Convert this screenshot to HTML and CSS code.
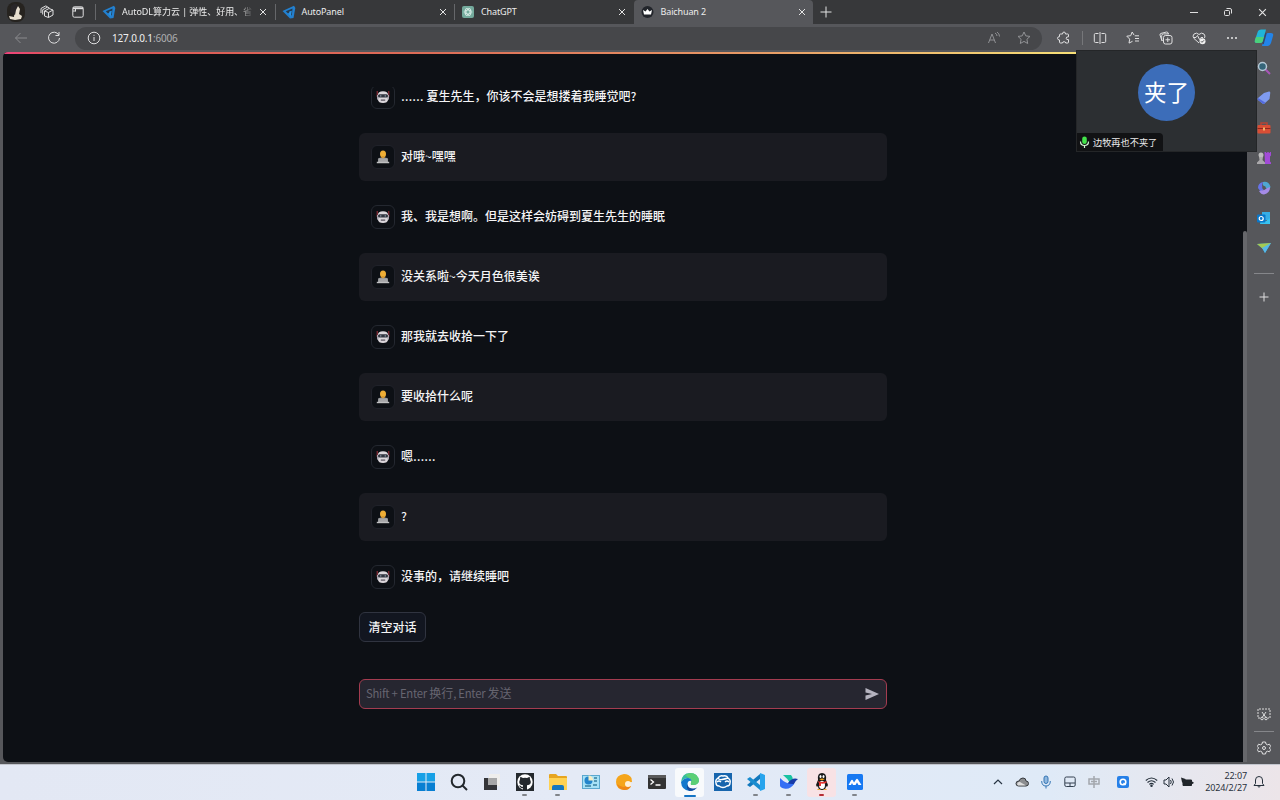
FILE: index.html
```html
<!DOCTYPE html>
<html lang="zh-CN">
<head>
<meta charset="utf-8">
<title>Baichuan 2</title>
<link rel="stylesheet" href="styles.css">
</head>
<body>
<svg class="defs" width="0" height="0">
  <symbol id="bot" viewBox="0 0 14 14">
    <path d="M1.200 1v6M12.800 1v6" stroke="#a3303c" stroke-width="1"/>
    <path d="M1.800 5Q2 1.200 7 1.200T12.200 5v4.500Q11.500 13 7 13T1.800 9.500z" fill="#dcd7dc"/>
    <path d="M1 5h1.500v4.500H1zM11.500 5H13v4.500h-1.500z" fill="#aaa5ae"/>
    <rect x="2" y="4.300" width="10" height="3.200" rx="1.500" fill="#30343e"/>
    <circle cx="4.700" cy="5.900" r=".8" fill="#7d8797"/><circle cx="9.300" cy="5.900" r=".8" fill="#7d8797"/>
    <path d="M4.800 9.500h4.400v1.200H4.800z" fill="#57525c"/>
  </symbol>
  <symbol id="person" viewBox="0 0 14 14">
    <path d="M2 12V9.500Q3 7.200 7 7.200t5 2.300V12z" fill="#77808a"/>
    <ellipse cx="7" cy="4" rx="3" ry="3.600" fill="#efae35"/>
    <path d="M5.500 6h3v2.500h-3z" fill="#d89a32"/>
    <path d="M2.300 8.300h9.400v4H2.300z" fill="#a5a5a7"/><path d="M.8 11.800h12.400v1.400H.8z" fill="#bfbfc0"/>
  </symbol>
  <symbol id="close" viewBox="0 0 8 8"><path d="M1 1l6 6M7 1L1 7" stroke="#e4e4e4" stroke-width="1"/></symbol>
  <symbol id="autodl" viewBox="0 0 14 14">
    <path d="M.5 6L12 .8 13.300 3 11.500 13 8 13.500z" fill="#2380cf"/>
    <path d="M3.800 6.300L10.500 3.400 9.900 10 7.900 11 8.300 7.300 5.800 8.200z" fill="#24394d"/>
    <path d="M7.300 6.500l2.500-.8-1 5.800-1.700-1.800z" fill="#2993e6"/>
  </symbol>
</svg>

<header class="titlebar">
  <div class="title-tools">
    <svg class="profile" width="18" height="20" viewBox="0 0 18 20"><rect width="18" height="20" rx="8" fill="#26231f"/><path d="M8 5l3-1 2 3-1 5 3 2-1 3-6 1-5-1-1-3 5 1z" fill="#e8dfcf"/><path d="M4 4q5-5 7 0l-2 4-1 5-5-3z" fill="#292628"/></svg>
    <svg width="14" height="14" viewBox="0 0 14 14" class="line"><path d="M4.500 6L9 3.500 13 5v5L8.500 12.500 4.500 11zM4.500 6l4 1.500L13 5M8.500 7.500v5M2.700 9.500V4.700L7.300 2.200l2 .6M1 8V3.500L5.500 1l2 .6"/></svg>
    <svg width="12" height="12" viewBox="0 0 12 12" class="line"><rect x=".8" y=".8" width="10.400" height="10.400" rx="1.500"/><path d="M1 2.300h10" stroke-width="1.800"/><path d="M3.500 3v2.500M1 5h2.500"/></svg>
  </div>
  <nav class="tabs">
    <div class="tab"><svg width="14" height="14"><use href="#autodl"/></svg><span class="tab-name fade">AutoDL算力云 | 弹性、好用、省</span><svg width="8" height="8"><use href="#close"/></svg></div>
    <div class="tab"><svg width="14" height="14"><use href="#autodl"/></svg><span class="tab-name">AutoPanel</span><svg width="8" height="8"><use href="#close"/></svg></div>
    <div class="tab"><svg width="14" height="14" viewBox="0 0 14 14"><rect x="1" y="1" width="12" height="12" rx="2" fill="#74aa9c"/><g fill="none" stroke="#dff0eb" stroke-width=".7"><ellipse cx="7" cy="7" rx="4" ry="2"/><ellipse cx="7" cy="7" rx="4" ry="2" transform="rotate(60 7 7)"/><ellipse cx="7" cy="7" rx="4" ry="2" transform="rotate(120 7 7)"/></g></svg><span class="tab-name">ChatGPT</span><svg width="8" height="8"><use href="#close"/></svg></div>
    <div class="tab active"><svg width="14" height="14" viewBox="0 0 14 14"><circle cx="6.500" cy="7" r="6" fill="#22252b"/><path d="M2 5l2.500 1.500 2-2.500 2 2.500L11 5l-1 4.500H3z" fill="#fff"/></svg><span class="tab-name">Baichuan 2</span><svg width="8" height="8"><use href="#close"/></svg></div>
  </nav>
  <svg class="newtab" width="12" height="12" viewBox="0 0 12 12"><path d="M6 .5v11M.5 6h11" stroke="#e3e3e3"/></svg>
  <div class="window-controls">
    <svg width="10" height="10" viewBox="0 0 10 10" class="line"><path d="M1 5.500h8"/></svg>
    <svg width="10" height="10" viewBox="0 0 10 10" class="line"><rect x="1.500" y="3.500" width="5" height="5" rx="1"/><path d="M3.500 1.500H7q1.500 0 1.500 1.500v3.500"/></svg>
    <svg width="9" height="9" viewBox="0 0 8 8"><use href="#close"/></svg>
  </div>
</header>

<div class="toolbar">
  <div class="nav-buttons">
    <svg width="14" height="12" viewBox="0 0 14 12" fill="none" stroke="#8a8b8e"><path d="M13 6H1.500M6.500 1l-5 5 5 5"/></svg>
    <svg width="14" height="14" viewBox="0 0 14 14" class="line"><path d="M11.800 4A5.500 5.500 0 1 0 12.500 7M12 1v3.500H8.500"/></svg>
  </div>
  <div class="address">
    <svg width="14" height="14" viewBox="0 0 14 14" class="line"><circle cx="7" cy="7" r="5.800"/><path d="M7 6v4M7 3.800v1"/></svg>
    <span class="url">127.0.0.1<span class="port">:6006</span></span>
    <svg width="14" height="14" viewBox="0 0 14 14" fill="none" stroke="#8f9093"><path d="M1.500 12L5 3l3.500 9M2.700 9h4.600M8 2q2 1 2 3M10 1q2.500 1.500 2.500 4.500"/></svg>
    <svg class="star" width="14" height="14" viewBox="0 0 14 14" fill="none" stroke="#929396"><path d="M7 1l1.800 3.900 4.200.5-3.100 2.900.8 4.200L7 10.400l-3.700 2.100.8-4.200L1 5.400l4.200-.5z"/></svg>
  </div>
  <div class="extensions"><svg width="14" height="14" viewBox="0 0 14 14" class="line"><path d="M4.500 3H6.500q0-2 1.500-2T9.500 3h2.300q.7 0 .7.700v2.100Q10.200 5.600 10.200 7.300t2.300 1.300v2.700q0 .7-.7.700H9.700q0-1.300-1.600-1.300T6.500 12H4.300q-.8 0-.8-.8V9Q1.500 9 1.500 7.300t2-1.600V4q0-1 1-1z"/></svg></div>
  <div class="actions">
    <svg width="14" height="14" viewBox="0 0 14 14" class="line"><path d="M5.500 2.500H2.500Q1.300 2.500 1.300 3.700v6.600q0 1.200 1.200 1.200h3M8.500 2.500h3q1.200 0 1.200 1.200v6.600q0 1.200-1.200 1.200h-3M7 1v12"/></svg>
    <svg width="14" height="14" viewBox="0 0 14 14" class="line"><path d="M8.700 4.800H13M9 7.500h4M9 10h4M8 4L6.200 1 4.700 4.700.8 5.200l2.900 2.900-.7 4L6.500 10.300"/></svg>
    <svg width="14" height="14" viewBox="0 0 14 14" class="line"><rect x="4.500" y="4.500" width="8.500" height="8.500" rx="2"/><path d="M8.750 6.500v4.500M6.500 8.750H11M3 10L1 4q-.3-1.200 1-1.600L7.500 1Q8.700.8 9 2l.3 1M3.500 10Q2.700 9 2.700 8V4.700q0-1.800 1.800-1.800H10"/></svg>
    <svg width="14" height="14" viewBox="0 0 14 14" class="line"><path d="M7 12L2 7.500Q0 5 2 3q2.500-2 5 .5Q9.500 1 12 3q1.700 2 .5 4M1.500 6.500H4l1.500-2 2 4 1.500-2h2"/><circle cx="10.500" cy="10.300" r="3" fill="#f1f1f1" stroke="none"/><path d="M9 10.300l1 1 2-2" stroke="#505155"/></svg>
    <svg width="12" height="4" viewBox="0 0 12 4" fill="#e8e8e8"><circle cx="2" cy="2" r="1"/><circle cx="6" cy="2" r="1"/><circle cx="10" cy="2" r="1"/></svg>
  </div>
  <div class="copilot"><svg width="20" height="18" viewBox="0 0 20 18"><path d="M4 2q1-1.500 3-1.500h5L9 12q-.7 2-3 2H3Q0 14 1 11z" fill="#20b5d9"/><path d="M2 8h8L9 12q-.7 2-3 2H3Q0 14 1 11z" fill="#4bd07b"/><path d="M11 6q1-2 3-2h3q3 0 2 3l-2 7q-1 3-3 3H8z" fill="#2384e8"/><path d="M12 4l-3 11" stroke="#34476a" stroke-width="1.500"/></svg></div>
</div>

<div class="workspace">
  <div class="page">
    <div class="progress"></div>
    <main class="app">
      <section class="chat">
        <div class="message"><span class="avatar"><svg width="14" height="14"><use href="#bot"/></svg></span><p><span class="dots">……</span> 夏生先生，你该不会是想搂着我睡觉吧?</p></div>
        <div class="message user"><span class="avatar"><svg width="14" height="14"><use href="#person"/></svg></span><p>对哦~嘿嘿</p></div>
        <div class="message"><span class="avatar"><svg width="14" height="14"><use href="#bot"/></svg></span><p>我、我是想啊。但是这样会妨碍到夏生先生的睡眠</p></div>
        <div class="message user"><span class="avatar"><svg width="14" height="14"><use href="#person"/></svg></span><p>没关系啦~今天月色很美诶</p></div>
        <div class="message"><span class="avatar"><svg width="14" height="14"><use href="#bot"/></svg></span><p>那我就去收拾一下了</p></div>
        <div class="message user"><span class="avatar"><svg width="14" height="14"><use href="#person"/></svg></span><p>要收拾什么呢</p></div>
        <div class="message"><span class="avatar"><svg width="14" height="14"><use href="#bot"/></svg></span><p>嗯<span class="dots">……</span></p></div>
        <div class="message user"><span class="avatar"><svg width="14" height="14"><use href="#person"/></svg></span><p>?</p></div>
        <div class="message"><span class="avatar"><svg width="14" height="14"><use href="#bot"/></svg></span><p>没事的，请继续睡吧</p></div>
      </section>
      <button class="clear">清空对话</button>
      <div class="prompt"><span><span class="latin">Shift + Enter </span>换行<span class="latin">, Enter </span>发送</span><svg width="14" height="12" viewBox="0 0 14 12"><path d="M.5 0L14 6 .5 12V7.500L7 6 .5 4.500z" fill="#b5b3bf"/></svg></div>
    </main>
    <div class="scrollbar"></div>
  </div>

  <aside class="sidebar">
    <svg width="14" height="14" viewBox="0 0 14 14"><path d="M8 8l5 5" stroke="#a855b8" stroke-width="2"/><circle cx="5.500" cy="5.500" r="4" fill="#356579" stroke="#b5c8d5" stroke-width="1.500"/></svg>
    <svg width="14" height="14" viewBox="0 0 14 14"><path d="M7 2l5-1.500q1.300 0 1.300 1.300L12.500 8l-5 4.500q-1 .8-2 0L1 9q-.8-1 0-2z" fill="#7f9bf0"/><path d="M1 7l7.500 4.700-1 .8q-1 .8-2 0L1 9q-.8-1 0-2z" fill="#536adc"/></svg>
    <svg width="14" height="14" viewBox="0 0 14 14"><path d="M4 4V2h6v2" fill="none" stroke="#b74434" stroke-width="1.500"/><rect x=".5" y="4" width="13" height="8.500" rx="1" fill="#d94e35"/><path d="M.5 7.500h13" stroke="#8e291f"/><path d="M6 6.500h2v3H6z" fill="#f3b066"/></svg>
    <svg width="14" height="14" viewBox="0 0 14 14"><path d="M7.500 1h1.700v1h1V1h1.600v1h1V1H14v3.500l-1 1v5l1 1V13H8z" fill="#a24bd7"/><circle cx="4" cy="4" r="2.500" fill="#bbb"/><path d="M2 6h4L5.500 9 8 11.500V13H0v-1.500L2.500 9z" fill="#aaa8ab"/></svg>
    <svg width="14" height="14" viewBox="0 0 14 14"><path d="M6 1Q1 2 1 7l3 4 3-3-2-3z" fill="#6673e8"/><path d="M6 1q6-1 7.500 5L12 9 8.500 7 6 4z" fill="#4fa7d2"/><path d="M13 6q0 6-6 7.500Q4 13.500 2 10l5-1 3.500-2z" fill="#a58be7"/><circle cx="7" cy="6.800" r="1.800" fill="#56575b"/></svg>
    <svg width="14" height="14" viewBox="0 0 14 14"><rect x="5" y="1" width="8" height="8" fill="#36aee6"/><path d="M4 7l5 3 4-3v6H3z" fill="#38c2f0"/><rect y="3.500" width="8.500" height="8" rx="1" fill="#0877ca"/><circle cx="4.200" cy="7.500" r="2" fill="none" stroke="#fff" stroke-width="1.200"/></svg>
    <svg width="14" height="14" viewBox="0 0 14 14"><path d="M0 3l14-1-6 10-2-4z" fill="#3e9edb"/><path d="M0 3l14-1-8 6z" fill="#a4ca52"/><path d="M5 7l9-5-6 10z" fill="#56b9e8"/></svg>
    <hr>
    <svg width="12" height="14" viewBox="0 0 12 14" class="line add"><path d="M6 2.500v9M1.500 7h9"/></svg>
    <svg class="capture" width="14" height="14" viewBox="0 0 14 14" fill="none" stroke="#ddd"><path d="M3 11H1V2h12v9h-2" stroke-dasharray="2 1"/><path d="M5 5l3.500 5M9 5l-3.500 5"/><circle cx="5" cy="11.500" r="1.300"/><circle cx="9" cy="11.500" r="1.300"/></svg>
    <hr class="lower">
    <svg width="14" height="14" viewBox="0 0 14 14" class="line"><path d="M5.500 1h3L9 3l1.500.8 2-.6 1.200 2.300L12.300 7l1.400 1.500-1.200 2.300-2-.6L9 11l-.5 2h-3L5 11l-1.500-.8-2 .6L.3 8.500 1.700 7 .3 5.500l1.200-2.300 2 .6L5 3z"/><circle cx="7" cy="7" r="1.500"/></svg>
  </aside>
</div>

<footer class="taskbar">
  <div class="apps">
    <span><svg width="18" height="18" viewBox="0 0 18 18"><path d="M0 0h8.500v8.500H0zM9.500 0H18v8.500H9.500z" fill="#17a0e6"/><path d="M0 9.500h8.500V18H0zM9.500 9.500H18V18H9.500z" fill="#087fd2"/></svg></span>
    <span><svg width="18" height="18" viewBox="0 0 18 18" fill="none" stroke="#23282d" stroke-width="2"><circle cx="8" cy="8" r="6.300"/><path d="M12.500 12.500L17 17"/></svg></span>
    <span><svg width="18" height="18" viewBox="0 0 18 18"><path d="M6 1h11v12H6z" fill="#efeeec"/><path d="M1 5h13v12H1z" fill="#343538"/><path d="M5 5h9v7H5z" fill="#a7a7a7"/></svg></span>
    <span class="running"><svg width="18" height="18" viewBox="0 0 18 18"><path d="M0 0h18v18H0z" fill="#24292e"/><circle cx="9" cy="9" r="7.700" fill="#fff"/><path d="M4.300 3.700L7 5q2-.5 4 0l2.700-1.300.3 2.500q2.500 5.500-3 6v5H7v-2q-2 .5-3-1.500l-1-1q1.500-.5 2.500 1H7v-1.500q-5.500-.5-3-6z" fill="#24292e"/></svg></span>
    <span class="running"><svg width="18" height="18" viewBox="0 0 18 18"><path d="M0 2q0-1 1-1h6l2 2h8q1 0 1 1v12H0z" fill="#e7a520"/><path d="M0 5h18v12H0z" fill="#ffd253"/><path d="M3 17v-3q0-2 2-2h8q2 0 2 2v3z" fill="#1677bf"/></svg></span>
    <span><svg width="18" height="16" viewBox="0 0 18 16"><path d="M0 1h18v14H0z" fill="#5ba8cf"/><path d="M1 2h16v12H1z" fill="#a7e1f6"/><circle cx="6.500" cy="6.500" r="4" fill="#2385cb"/><path d="M6.500 6.500v-5q4 0 5 5z" fill="#f3ecc5"/><path d="M12 4h3M12 7h3M3 12h6M11 11h4" stroke="#377f9e" stroke-width="1.500"/></svg></span>
    <span><svg width="18" height="18" viewBox="0 0 18 18"><path d="M9 1q5 0 7.500 4L17 9l-4 .5-1 3 4 1q-3 4-7 3.500-8-1-8-8T9 1z" fill="#f5a51b"/><path d="M2 11q6 5 10 1.500l4 1q-3 4-7 3.500-6-1-7-6z" fill="#ef8717"/><circle cx="13" cy="11" r="3" fill="#fff0d6"/></svg></span>
    <span><svg width="18" height="14" viewBox="0 0 18 14"><rect width="18" height="14" rx="1" fill="#333"/><path d="M0 0h18v3H0z" fill="#59595a"/><path d="M2.500 4.500l3 2.500-3 2.500M7.500 10h5" fill="none" stroke="#fff" stroke-width="1.300"/></svg></span>
    <span class="running current"><svg width="18" height="18" viewBox="0 0 18 18"><path d="M0 9Q1 0 9 0t9 8q-1 4-6 4-3 0-2-2 1.500-5-3-5-4 0-7 4z" fill="#34bba1"/><path d="M9 0q8 0 9 8-1 4-6 4-3 0-2-2 1-4-2-5L4 2z" fill="#5bcf75"/><path d="M0 9q3-4 7-4 3 0 3.500 3Q7 7 6.500 11q0 5 6 5 3 0 4-2-3 4-8 4-8-1-8.500-9z" fill="#1478cc"/><path d="M6.500 11q0 4 4.500 4.500 4 .5 5.500-1.500-3 4-8 4-4-2-2-7z" fill="#164c9e"/></svg></span>
    <span><svg width="18" height="18" viewBox="0 0 18 18"><path d="M0 0h18v18H0z" fill="#1765ad"/><path d="M4 5Q6 2 9 3q4-1 5 2 3 2 2 5 0 3-3 3-4 3-8 0-3 0-3-3-1-3 2-5zM4 5q1 2 4 1.500T14 5M3 9q2-2 4 0M11 9q2-2 4 0" fill="none" stroke="#fff" stroke-width="1.400"/></svg></span>
    <span class="running"><svg width="18" height="18" viewBox="0 0 18 18"><path d="M13 0l5 2v14l-5 2z" fill="#27a4ed"/><path d="M13 1v5L3 14 0 12z" fill="#1278bd"/><path d="M13 17v-5L3 4 0 6z" fill="#198ccf"/></svg></span>
    <span class="running"><svg width="18" height="18" viewBox="0 0 18 18"><path d="M3 2h8q2 2 2 5l-3 3Q7 5 3 2z" fill="#18c2a3"/><path d="M8 10q4-6 10-4-3 2-4 5-3 3-7 1z" fill="#173aa8"/><path d="M0 5q6 6.500 14 6-4 6-10 4.500-4-1-4-3z" fill="#356ff4"/></svg></span>
    <span class="running alert"><svg width="18" height="18" viewBox="0 0 18 18"><path d="M5 7q-1-7 4-7t4 7l2 5-1 2-1-1q0 4-4 4t-4-4l-1 1-1-2z" fill="#17181a"/><ellipse cx="9" cy="12" rx="3" ry="4" fill="#fff"/><ellipse cx="7.500" cy="3.500" rx="1" ry="1.500" fill="#fff"/><ellipse cx="10.500" cy="3.500" rx="1" ry="1.500" fill="#fff"/><path d="M6 6q3-1 6 0l-3 1.500zM4 17q1-2 4 0zM10 17q3-2 4 0z" fill="#f5a91c"/><path d="M4.500 8q4.500 2 9 0v2Q10 11 8 10.500V13H6v-3z" fill="#e43432"/></svg></span>
    <span class="running"><svg width="16" height="16" viewBox="0 0 16 16"><rect width="16" height="16" rx="1.500" fill="#1779f2"/><path d="M1.500 11l2.500-4.500q1-1.500 2 0L7 8.500 9 5.500q1-1.500 2 0l3.500 5.500h-3L10 8.500 8.500 11H6L5 9l-1 2z" fill="#fff"/></svg></span>
  </div>
  <div class="tray">
    <svg width="10" height="8" viewBox="0 0 10 8" fill="none" stroke="#283544" stroke-width="1.200"><path d="M1 6l4-4 4 4"/></svg>
    <svg width="14" height="12" viewBox="0 0 14 12"><path d="M3.500 10Q1 10 1 7.500T4 5q1-3 4-3t3 3q2.500 0 2.500 2.500T11 10z" fill="#8b8d90" stroke="#34383c"/><path d="M3 9.500q-1.500-1-.5-2.500T5 6l6 3.500z" fill="#ddd"/></svg>
    <svg width="12" height="14" viewBox="0 0 12 14" fill="none" stroke="#3475b4"><rect x="4" y="1" width="4" height="7.500" rx="2" fill="#8fb8df"/><path d="M1.700 6q0 5 4.300 5t4.300-5M6 11v2.500"/></svg>
    <svg width="12" height="12" viewBox="0 0 12 12" fill="none" stroke="#344150"><rect x=".8" y="1" width="10.400" height="9.500" rx="1.500"/><path d="M1 7h10M6 7v3"/></svg>
    <svg width="12" height="12" viewBox="0 0 12 12" fill="none" stroke="#a3a7ad" stroke-width="1.500"><path d="M1 3h10v5H1zM6 0v12M3 5.500h6"/></svg>
    <span class="q"><svg width="12" height="12" viewBox="0 0 12 12"><rect width="12" height="12" rx="2" fill="#2680e8"/><circle cx="6" cy="6" r="2.800" fill="none" stroke="#fff" stroke-width="1.600"/><path d="M6.500 7l2 2" stroke="#fff" stroke-width="1.200"/></svg></span>
    <span class="status"><svg width="13" height="12" viewBox="0 0 13 12" fill="none" stroke="#26313c" stroke-width="1.100"><path d="M.8 4.500q5.700-5 11.400 0M2.500 6.500q4-3.500 8 0M4.300 8.300q2.200-2 4.400 0"/><circle cx="6.500" cy="9.800" r=".7"/></svg><svg width="12" height="12" viewBox="0 0 12 12" fill="none" stroke="#26313c"><path d="M1 4h2l3-3v10L3 8H1zM7.500 4q1.500 2 0 4M9 2.500q3 3.500 0 7"/></svg><svg width="14" height="12" viewBox="0 0 14 12"><path d="M3 4h8.500v5.500H3zM12.500 6h.5v1.500h-.5z" fill="#20252a" stroke="#20252a"/><path d="M1 1.500l4.500 1.500v3q-2 2-3.500 0z" fill="#20252a"/></svg></span>
    <div class="clock"><span>22:07</span><span>2024/2/27</span></div>
    <svg class="bell" width="12" height="14" viewBox="0 0 12 14" fill="none" stroke="#26313c"><path d="M1 10.500l1.500-2V5q0-3.500 3.500-3.500T9.500 5v3.500l1.500 2zM4.500 11q1.500 2.500 3 0"/></svg>
  </div>
</footer>

<section class="call">
  <div class="call-avatar"><span>夹了</span></div>
  <div class="speaker"><svg width="11" height="13" viewBox="0 0 11 13"><rect x="3.200" y=".5" width="4.600" height="7.500" rx="2.300" fill="#42e34a"/><path d="M1.500 5.500q0 4 4 4t4-4M5.500 9.500V12" fill="none" stroke="#d6f7d7" stroke-width="1.200"/></svg><span>边牧再也不夹了</span></div>
</section>
</body>
</html>
```
FILE: styles.css
```css
* { box-sizing: border-box; }
body {
  margin: 0;
  width: 1280px;
  height: 800px;
  overflow: hidden;
  position: relative;
  display: flex;
  flex-direction: column;
  background: #56575b;
  font-family: "Noto Sans", "Noto Sans CJK SC", sans-serif;
}
svg { display: block; flex: none; }
.defs { position: absolute; }
.line { fill: none; stroke: #dfdfe0; stroke-width: 1; }

.titlebar { height: 24px; display: flex; align-items: center; background: #37383a; flex: none; }
.title-tools { width: 95px; display: grid; grid-template-columns: 32px 29px 34px; place-items: center; }
.tabs { display: flex; height: 24px; }
.tab {
  width: 179.5px;
  display: flex;
  align-items: center;
  padding: 0 7.5px 0 7px;
  position: relative;
  color: #ededed;
  font-size: 9px;
}
.tab:not(.active)::before { content: ""; width: 1px; height: 16px; background: #66676a; position: absolute; left: 0; }
.tab-name { margin-left: 6px; flex: 1; min-width: 0; margin-right: 7px; white-space: nowrap; line-height: 16px; letter-spacing: -.12px; }
.fade { letter-spacing: -.05px; -webkit-mask-image: linear-gradient(90deg, #000 88%, transparent 102%); mask-image: linear-gradient(90deg, #000 88%, transparent 102%); }
.active { background: #56575b; border-radius: 4px 4px 0 0; }
.newtab { margin-left: 7px; }
.window-controls { margin-left: auto; width: 103px; display: grid; grid-template-columns: 34px 34px 35px; place-items: center; }

.toolbar { height: 28px; display: flex; align-items: center; flex: none; background: #56575b; }
.nav-buttons { width: 75px; display: flex; gap: 19px; padding-left: 14px; align-items: center; }
.address { width: 967px; height: 23px; border-radius: 12px; background: #46474a; display: flex; align-items: center; padding: 0 11px 0 12px; }
.url { margin: 0 auto 0 11px; font-size: 10px; color: #f0f0f0; letter-spacing: -.16px; }
.port { color: #aeafb1; }
.star { margin-left: 16px; }
.extensions { width: 41px; height: 14px; padding-left: 2px; display: grid; place-items: center; border-right: 1px solid #76777a; }
.actions { display: grid; grid-template-columns: repeat(5, 33px); place-items: center; }
.copilot { width: 32px; display: grid; place-items: center; }

.workspace { height: 712px; display: flex; flex: none; }
.page { width: 1244px; height: 710px; margin-left: 3px; background: #0d1015; border-radius: 5px 0 0 5px; overflow: hidden; display: grid; grid-template-rows: 2px 33px 1fr; grid-template-columns: 1fr 4px; }
.progress { grid-column: 1 / 3; background: linear-gradient(90deg, #ef437e 0, #dd5558 4%, #dd6e58 35%, #e79a66 60%, #f7e278 87%, #fffd80 100%); }
.app { grid-row: 3; width: 528px; margin-left: 356px; overflow: hidden; }
.scrollbar { grid-column: 2; grid-row: 3; margin-top: 144px; background: #66676b; border-radius: 2px 2px 0 0; }
.chat { display: flex; flex-direction: column; gap: 12px; margin-top: -14px; }
.message { height: 48px; padding: 0 12px; display: flex; align-items: center; gap: 6px; border-radius: 6px; color: #f4f4f5; font: 500 12px/18px "Noto Sans CJK SC", sans-serif; }
.message p { margin: 0; padding-bottom: 2px; }
.dots { font: 400 14.600px/0 "Open Sans", sans-serif; }
.user { background: #1a1b21; }
.avatar { width: 24px; height: 24px; border-radius: 6px; border: 1px solid #242830; background: #0d1015; display: grid; place-items: center; }
.user .avatar { border-color: #20222a; }
.clear { display: block; width: 67px; height: 30px; margin: 11px 0 0; padding: 0 0 1px; border: 1px solid #303440; border-radius: 6px; background: #121620; color: #f4f4f5; font: 500 12px/18px "Noto Sans CJK SC", sans-serif; }
.prompt { height: 30px; margin-top: 37px; border: 1px solid #a43c50; border-radius: 6px; background: #262630; display: flex; align-items: center; justify-content: space-between; padding: 0 7px 0 6px; color: #666570; font: 12px/18px "Noto Sans CJK SC", sans-serif; }
.prompt > span { padding-bottom: 2px; }
.latin { font-size: 11.300px; letter-spacing: -.26px; white-space: pre; }

.sidebar { width: 33px; display: flex; flex-direction: column; align-items: center; gap: 16px; padding-top: 9px; }
.sidebar hr { width: 20px; height: 1px; border: 0; background: #85868a; margin: 2px 0 0; flex: none; }
.add { margin-top: 0; }
.capture { margin-top: auto; margin-bottom: 1px; }
.sidebar .lower { margin: -7px 0; }
.sidebar > svg:last-child { margin-bottom: 9px; }

.taskbar { height: 36px; flex: none; display: flex; align-items: center; padding: 0 9px 1px 409px; background: linear-gradient(90deg, #e3e8f4, #e4eaf6 45%, #dfeaf7 82%, #ece5e9); border-top: 1px solid #c3c6ce; }
.apps { display: flex; }
.apps > span { width: 33px; height: 34px; display: grid; place-items: center; position: relative; }
.apps svg { position: relative; }
.running::after { content: ""; position: absolute; width: 5px; height: 2px; border-radius: 1px; background: #81848a; left: 14px; bottom: 3px; }
.current::before, .alert::before { content: ""; position: absolute; inset: 3px 2px 2px; border-radius: 3px; background: #f8fafc; }
.current::after { width: 12px; left: 11px; bottom: 2px; background: #1474c4; }
.alert::before { background: #f8e2e5; }
.alert::after { background: #b52d35; }
.tray { margin-left: auto; display: grid; grid-template-columns: repeat(5, 24px) 34px 57px 50px 24px; place-items: center; color: #29313c; }
.status { width: 48px; display: flex; align-items: center; gap: 5px; }
.clock { width: 50px; display: flex; flex-direction: column; text-align: right; font: 9px/12px "Noto Sans", sans-serif; letter-spacing: -.1px; }

.call { position: absolute; left: 1076px; top: 50px; width: 181px; height: 102px; background: #2c2f32; border: 1px solid #242628; }
.call-avatar { width: 57px; height: 57px; margin: 13px 0 0 61px; border-radius: 50%; background: #3c6db9; color: #fff; display: grid; place-items: center; font: 22.500px/32px "Noto Sans CJK SC", sans-serif; }
.call-avatar span { padding-bottom: 3px; }
.speaker { width: 86px; height: 18px; margin-top: 12px; display: flex; align-items: center; gap: 3px; padding-left: 2px; background: #111214; border-radius: 0 4px 0 0; color: #ececec; font: 9.200px/14px "Noto Sans CJK SC", sans-serif; white-space: nowrap; }
```
